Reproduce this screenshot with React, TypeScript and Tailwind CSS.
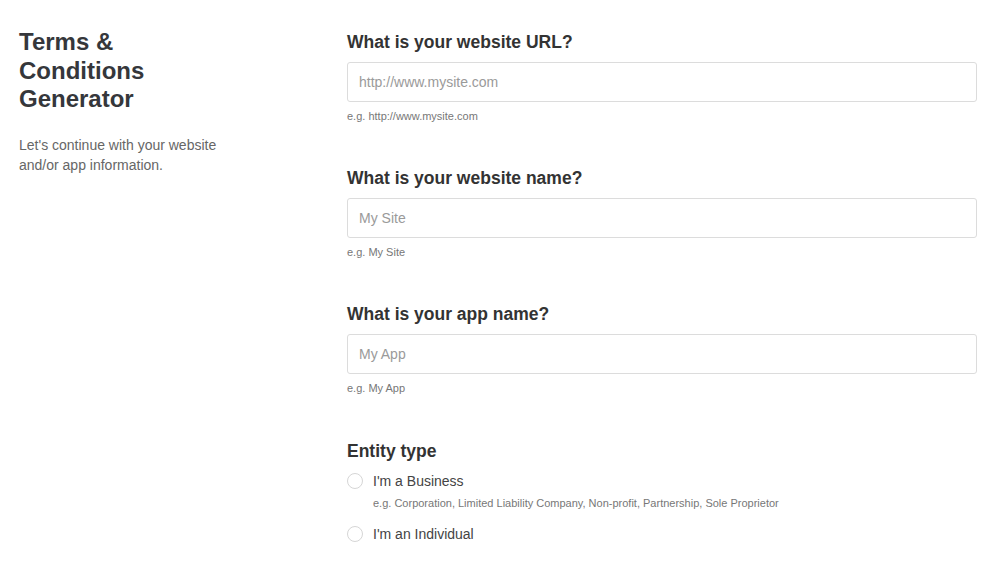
import React from "react";

function Field({ label, placeholder, hint }: { label: string; placeholder: string; hint: string }) {
  return (
    <div className="flex flex-col">
      <label className="text-[17.5px] leading-[24px] font-bold text-[#333]">{label}</label>
      <input
        type="text"
        placeholder={placeholder}
        className="mt-[8px] h-[40px] w-full rounded-[3px] border border-[#dcdcdc] bg-white px-[11px] text-[14px] text-[#333] placeholder:text-[#9a9a9a] outline-none"
      />
      <p className="mt-[6px] text-[11px] leading-[16px] text-[#777]">{hint}</p>
    </div>
  );
}

function Radio({ label }: { label: string }) {
  return (
    <div className="flex items-center gap-[10px] h-[20px]">
      <span className="inline-block w-[16px] h-[16px] rounded-full border border-[#d6d6d6] bg-white" />
      <span className="text-[14px] leading-[20px] text-[#444]">{label}</span>
    </div>
  );
}

export default function App() {
  return (
    <div
      className="w-[1000px] h-[566px] bg-white flex overflow-hidden"
      style={{ fontFamily: '"Liberation Sans", Arial, sans-serif' }}
    >
      <div className="w-[347px] pl-[19px] pt-[28px] shrink-0">
        <h1 className="text-[24px] leading-[28.5px] font-bold text-[#35373b] w-[200px]">
          Terms &amp; Conditions Generator
        </h1>
        <p className="mt-[21px] w-[225px] text-[14px] leading-[20px] text-[#666]">
          Let's continue with your website and/or app information.
        </p>
      </div>
      <div className="w-[630px] pt-[30px] flex flex-col gap-[42px]">
        <Field label="What is your website URL?" placeholder="http://www.mysite.com" hint="e.g. http://www.mysite.com" />
        <Field label="What is your website name?" placeholder="My Site" hint="e.g. My Site" />
        <Field label="What is your app name?" placeholder="My App" hint="e.g. My App" />
        <div className="flex flex-col">
          <div className="text-[17.5px] leading-[24px] font-bold text-[#333] mt-[1px]">Entity type</div>
          <div className="mt-[8px]">
            <Radio label="I'm a Business" />
          </div>
          <p className="mt-[4px] pl-[26px] text-[11px] leading-[16px] text-[#777]">
            e.g. Corporation, Limited Liability Company, Non-profit, Partnership, Sole Proprietor
          </p>
          <div className="mt-[13px]">
            <Radio label="I'm an Individual" />
          </div>
        </div>
      </div>
    </div>
  );
}
